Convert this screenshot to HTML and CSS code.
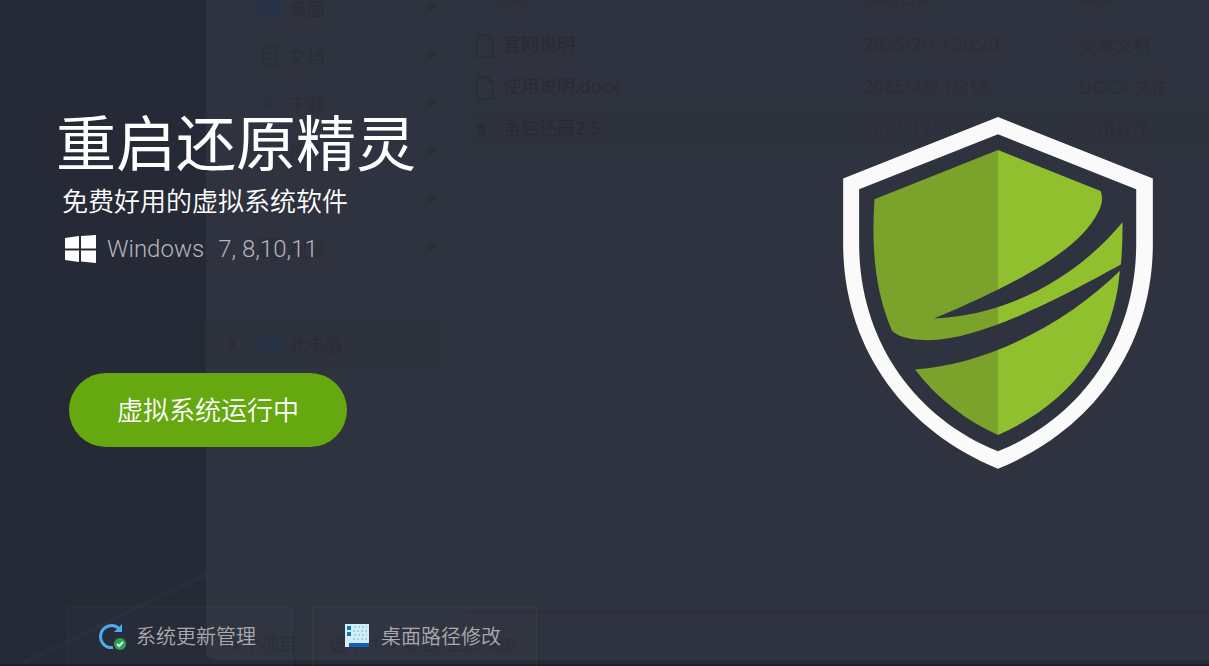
FILE: index.html
```
<!DOCTYPE html>
<html lang="zh-CN">

<head>
    <meta charset="UTF-8">
    <meta name="viewport" content="width=device-width, initial-scale=1.0">
    <title>重启还原精灵</title>
    <link rel="stylesheet" href="styles.css">
</head>

<body>
    <!-- Shared icons -->
    <svg class="symbols" aria-hidden="true">
        <symbol id="pin" viewBox="0 0 14 14">
            <path d="M8 0l6 6-2 1-1 0-2 3 0 3-3-3-5 4 4-5-3-3 3 0 3-2 0-1z" />
        </symbol>
        <symbol id="file" viewBox="0 0 18 24">
            <path d="M1 1h11l5 5v17H1zM12 1v5h5" fill="none" stroke="currentColor" stroke-width="1.5" />
        </symbol>
        <symbol id="screen" viewBox="0 0 24 22">
            <rect y="1" width="24" height="18" rx="1" fill="#283246" />
            <path d="M9 19h6v2H9z" fill="#2a303d" />
        </symbol>
    </svg>

    <!-- Explorer window behind the overlay -->
    <div class="desktop">
        <svg class="streak" viewBox="0 0 206 92" aria-hidden="true">
            <path d="M22 92L206 2" stroke="#2a2e3a" stroke-width="5" />
        </svg>
        <div class="explorer">
            <nav class="sidebar">
                <a class="place" href="#"><svg class="place-icon"><use href="#screen" /></svg>桌面<svg class="pin"><use href="#pin" /></svg></a>
                <a class="place" href="#"><svg class="place-icon" viewBox="0 0 24 22"><rect x="4" y="0" width="17" height="22" fill="#2b2f3a" /><path d="M7 6h11M7 11h11M7 16h11" stroke="#2f333f" stroke-width="2" /></svg>文档<svg class="pin"><use href="#pin" /></svg></a>
                <a class="place" href="#"><svg class="place-icon" viewBox="0 0 24 22"><path d="M13 1v15M7 10l6 6 6-6M6 21h14" fill="none" stroke="#293042" stroke-width="2" /></svg>下载<svg class="pin"><use href="#pin" /></svg></a>
                <a class="place" href="#"><svg class="place-icon"></svg>图片<svg class="pin"><use href="#pin" /></svg></a>
                <a class="place" href="#"><svg class="place-icon"></svg>音乐<svg class="pin"><use href="#pin" /></svg></a>
                <a class="place" href="#"><svg class="place-icon" viewBox="0 0 24 22"><rect x="2" y="1" width="20" height="20" rx="2" fill="#2b2f3a" /></svg>视频<svg class="pin"><use href="#pin" /></svg></a>
                <a class="place computer" href="#"><svg class="chevron" viewBox="0 0 8 12"><path d="M1 1l5 5-5 5" fill="none" stroke="currentColor" stroke-width="2" /></svg><svg class="place-icon"><use href="#screen" /></svg>此电脑</a>
            </nav>
            <div class="content">
                <table class="files">
                    <thead>
                        <tr>
                            <th class="col-name">名称</th>
                            <th class="col-date">修改日期</th>
                            <th>类型</th>
                        </tr>
                    </thead>
                    <tbody>
                        <tr>
                            <td class="name"><svg class="file-icon"><use href="#file" /></svg>官网说明</td>
                            <td>2025/2/13 20:20</td>
                            <td>文本文档</td>
                        </tr>
                        <tr>
                            <td class="name"><svg class="file-icon"><use href="#file" /></svg>使用说明.docx</td>
                            <td>2025/4/9 16:16</td>
                            <td>DOCX 文件</td>
                        </tr>
                        <tr class="selected">
                            <td class="name"><svg class="file-icon" viewBox="0 0 18 24"><path d="M1 7l8-3v17C4 18 1 13 1 7z" fill="#292d38" /><path d="M11 5l6 2-1 5-5 2zM11 16l4-1-4 5z" fill="#2b303b" /></svg>重启还原2.5</td>
                            <td>2024/12/30 9:30</td>
                            <td>应用程序</td>
                        </tr>
                    </tbody>
                </table>
            </div>
            <div class="status">
                <span class="count">3 个项目</span>
                <span>选中 1 个项目&nbsp; 25.5 MB</span>
            </div>
        </div>
    </div>

    <!-- Main overlay -->
    <div class="app">
        <main class="main">
            <section class="intro">
                <h1 class="title">重启还原精灵</h1>
                <p class="subtitle">免费好用的虚拟系统软件</p>
                <p class="platform">
                    <svg class="windows-logo" viewBox="0 0 32 28" fill="#fff" aria-hidden="true">
                        <path d="M1 3l14-2v12.500H1zM17 1l15-1v13.500H17zM1 15.500h14V27L1 25zM17 15.500h15V28l-15-1.500z" />
                    </svg>
                    <span>Windows</span>
                    <span class="versions">7, 8,10,11</span>
                </p>
                <button class="run-btn" type="button">虚拟系统运行中</button>
            </section>

            <svg class="shield" viewBox="69 50 930 1057" role="img" aria-label="重启还原精灵">
                <defs>
                    <linearGradient id="halves" gradientUnits="userSpaceOnUse" x1="0" y1="0" x2="1068" y2="0">
                        <stop offset="0.5" stop-color="#7ba22b" />
                        <stop offset="0.5" stop-color="#91c02f" />
                    </linearGradient>
                </defs>
                <path fill="#fafafa" fill-rule="evenodd" d="M534 50L999 235V430C999 740 820 990 534 1106C250 990 69 740 69 430V235Z
                    M534 102L117 267V430C117 715 278 950 534 1054C790 950 949 715 949 430V267Z" />
                <path fill="url(#halves)" d="M163 297L534 149L842 272C849 290 848 312 835 335C785 435 640 530 342 655C580 645 780 520 908 366Q908 440 903 493C760 570 470 735 300 719C260 716 228 706 215 690C160 560 155 430 163 297Z" />
                <path fill="url(#halves)" d="M285 808C500 795 740 670 900 512C882 740 750 910 534 1005C440 962 350 895 285 808Z" />
            </svg>
        </main>

        <footer class="tools">
            <button class="tool-btn" type="button">
                <svg class="tool-icon" viewBox="0 0 28 28" aria-hidden="true">
                    <path d="M21 6.500A11 11 0 1 0 15 25.500" fill="none" stroke="#4fa9f2" stroke-width="3" />
                    <path d="M24 2v8h-8z" fill="#4fa9f2" />
                    <circle cx="22" cy="22" r="6" fill="#2ba252" />
                    <path d="M19 22l2 2 4-4" fill="none" stroke="#e4f6e9" stroke-width="2" />
                </svg>
                系统更新管理
            </button>
            <button class="tool-btn" type="button">
                <svg class="tool-icon" viewBox="0 0 28 28" aria-hidden="true">
                    <rect x="2" y="2" width="24" height="23" fill="#d3eef9" />
                    <path d="M11 5h13M10 9h14M11 13h13M10 17h14" stroke="#9cd6ef" stroke-width="2" stroke-dasharray="2 2" />
                    <rect x="4" y="4" width="4" height="4" fill="#1273cf" />
                    <rect x="4" y="10" width="4" height="4" fill="#1273cf" />
                    <rect x="6" y="21" width="20" height="4" fill="#0d62bd" />
                </svg>
                桌面路径修改
            </button>
        </footer>
    </div>
</body>

</html>
```
FILE: styles.css
```
/* Page */
* {
    box-sizing: border-box;
}

body {
    margin: 0;
    background-color: #262a36;
    color: #ffffff;
    font-family: "Noto Sans CJK SC", "Noto Sans", sans-serif;
}

.symbols {
    position: absolute;
    width: 0;
    height: 0;
}

/* Background windows */
.desktop {
    position: absolute;
    inset: 0;
    overflow: hidden;
    border-bottom: 2px solid #211e2e;
}

.streak {
    position: absolute;
    left: 0;
    bottom: 0;
    width: 206px;
    height: 92px;
}

.explorer {
    position: absolute;
    top: -40px;
    right: 0;
    bottom: 4px;
    left: 206px;
    display: grid;
    grid-template-columns: 261px 1fr;
    grid-template-rows: 1fr 46px;
    border-radius: 0 0 0 8px;
    background-color: #2f333f;
    color: #292d38;
    font-family: "Noto Sans", "Noto Sans CJK SC", sans-serif;
    font-size: 18px;
}

/* Sidebar */
.sidebar {
    padding: 24px 27px 0 0;
}

.place {
    display: flex;
    align-items: center;
    height: 48px;
    padding: 0 4px 0 51px;
    color: #292d38;
    text-decoration: none;
}

.place-icon {
    width: 24px;
    height: 22px;
    margin-right: 8px;
}

.pin {
    width: 14px;
    height: 14px;
    margin-left: auto;
    fill: #292d38;
}

.computer {
    margin-top: 48px;
    padding-left: 22px;
    background-color: #2e323d;
}

.chevron {
    width: 8px;
    height: 12px;
    margin-right: 21px;
}

/* File list */
.content {
    padding-top: 17px;
    border-bottom: 3px solid #2c2f3b;
}

.files {
    width: 100%;
    border-collapse: collapse;
    table-layout: fixed;
}

.files th,
.files td {
    height: 42px;
    padding: 0 8px;
    font-weight: 400;
    text-align: left;
    white-space: nowrap;
}

.files th {
    height: 46px;
    padding-bottom: 8px;
    color: #2b2f3a;
}

.files td {
    color: #2a2e39;
}

.files .col-name {
    width: 388px;
    padding-left: 26px;
}

.files .col-date {
    width: 216px;
}

.files .name {
    color: #282b37;
}

.file-icon {
    width: 20px;
    height: 24px;
    margin-right: 8px;
    color: #2a2e39;
    vertical-align: middle;
}

.selected {
    background-color: #2e323d;
}

/* Status bar */
.status {
    grid-column: 1 / 3;
    display: flex;
    align-items: center;
    padding: 12px 0 0 22px;
}

.count {
    width: 101px;
}

/* Main overlay */
.app {
    position: relative;
    display: flex;
    flex-direction: column;
    min-height: 100vh;
}

.main {
    flex: 1;
    display: flex;
    justify-content: space-between;
    align-items: flex-start;
    padding: 106px 56px 0;
}

.title {
    margin: 0;
    font-size: 60px;
    font-weight: 400;
    line-height: 68px;
}

.subtitle {
    margin: 6px 0 9px 6px;
    font-size: 26px;
    font-weight: 350;
    line-height: 40px;
}

.platform {
    display: flex;
    align-items: center;
    margin: 0 0 0 8px;
    color: #b4b6bb;
    font-family: Roboto, sans-serif;
    font-size: 24px;
    font-weight: 300;
    line-height: 40px;
}

.windows-logo {
    width: 32px;
    height: 28px;
    margin-right: 11px;
}

.versions {
    margin-left: 14px;
}

.run-btn {
    width: 278px;
    height: 74px;
    margin: 104px 0 0 13px;
    padding-bottom: 4px;
    border: none;
    border-radius: 37px;
    background-color: #66a810;
    color: #ffffff;
    font-family: inherit;
    font-size: 26px;
    font-weight: 350;
    cursor: pointer;
}

.run-btn:hover {
    background-color: #71b716;
}

.shield {
    width: 310px;
    height: 352px;
    margin-top: 11px;
}

/* Bottom tools */
.tools {
    display: flex;
    gap: 20px;
    padding-left: 67px;
}

.tool-btn {
    display: flex;
    align-items: center;
    gap: 10px;
    width: 225px;
    height: 60px;
    padding: 0 0 2px 30px;
    border: 1px solid rgba(255, 255, 255, 0.03);
    border-bottom: none;
    border-radius: 4px 4px 0 0;
    background-color: rgba(255, 255, 255, 0.01);
    color: #a9abaf;
    font-family: inherit;
    font-size: 20px;
    font-weight: 350;
    cursor: pointer;
}

.tool-btn:hover {
    background-color: rgba(255, 255, 255, 0.06);
}

.tool-icon {
    width: 28px;
    height: 28px;
}
```
